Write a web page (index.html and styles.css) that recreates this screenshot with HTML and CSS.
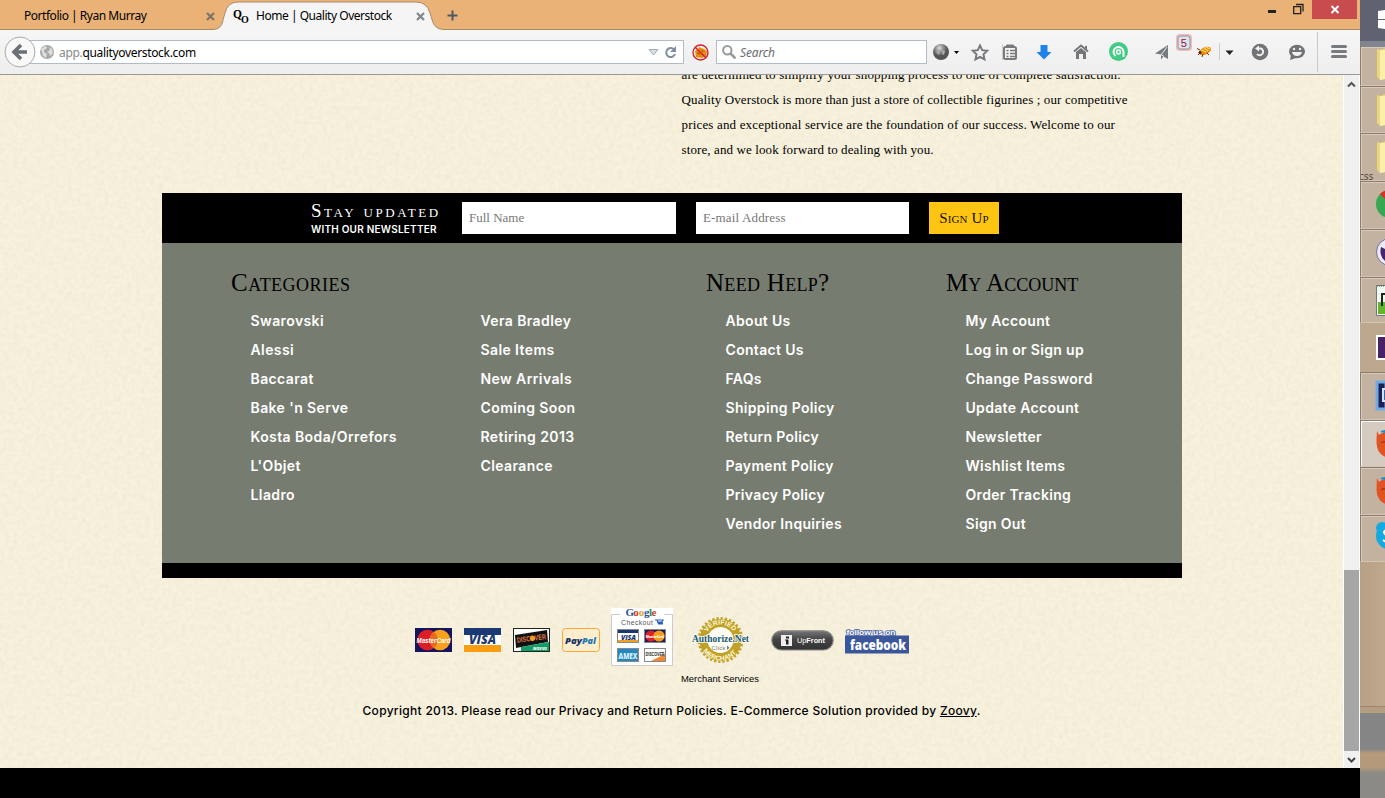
FILE: index.html
```html
<!DOCTYPE html>
<html lang="en">
<head>
<meta charset="utf-8">
<title>Home | Quality Overstock</title>
<link rel="stylesheet" href="styles.css">
</head>
<body>
<div class="desktop">
<div class="window">
  <header class="tabs">
    <div class="tab"><span class="tab-text">Portfolio | Ryan Murray</span>
      <svg class="close" width="9" height="9" viewBox="0 0 9 9"><path d="M1 1l7 7M8 1l-7 7" stroke="#7d7468" stroke-width="2.2"/></svg></div>
    <div class="tab active">
      <svg class="tab-shape" width="231" height="31" viewBox="0 0 231 31"><path d="M0 29.5C10 29 9 22 12 13Q14.500 2 25 2H203Q214 2 217 13C220 22 220 29 231 29.500V31H0Z" fill="#f5f5f5"/><path d="M0 29.500C10 29 9 22 12 13Q14.500 2 25 2H203Q214 2 217 13C220 22 220 29 231 29.500" fill="none" stroke="#a98a68"/></svg>
      <svg class="favicon" width="17" height="17" viewBox="0 0 17 17"><text x="0" y="9.500" font-size="11.500" font-weight="bold">Q</text><text x="8" y="15" font-size="10" font-weight="bold">O</text></svg>
      <span class="tab-text">Home | Quality Overstock</span>
      <svg class="close" width="9" height="9" viewBox="0 0 9 9"><path d="M1 1l7 7M8 1l-7 7" stroke="#7f858a" stroke-width="2.200"/></svg></div>
    <svg class="plus" width="11" height="11" viewBox="0 0 11 11"><path d="M5.500 .5v10M.5 5.500h10" stroke="#4c5964" stroke-width="2"/></svg>
    <div class="controls">
      <svg width="44" height="19" viewBox="0 0 44 19"><path d="M0 11.500h8" stroke="#222" stroke-width="3"/><path d="M25.700 6.700h7v7h-7zM28 4.500h7v7" fill="none" stroke="#222" stroke-width="1.300"/></svg>
      <svg class="win-close" width="45" height="19" viewBox="0 0 45 19"><path d="M19.500 6l7 7M26.500 6l-7 7" stroke="#fff" stroke-width="1.900"/></svg>
    </div>
  </header>
  <nav class="toolbar">
    <svg class="back" width="33" height="33" viewBox="0 0 33 33"><circle cx="16" cy="16" r="15" fill="#f8f8f8" stroke="#aaa"/><path d="M17 9l-7 7 7 7M10.500 16H23" fill="none" stroke="#6c7076" stroke-width="3.600"/></svg>
    <div class="url">
      <svg width="14" height="14" viewBox="0 0 14 14"><circle cx="7" cy="7" r="7" fill="#a7a7a7"/><path d="M1 4l4-3 2 1-1 2-2 1v2l3 2-1 4-3-2-1-4zM9 2l3 2 1 4-3 3-1-3-2-1 3-2z" fill="#dedede"/></svg>
      <span class="address"><i>app.</i>qualityoverstock.com</span>
      <svg width="29" height="14" viewBox="0 0 29 14"><path d="M1 4.500h9L5.500 10z" fill="#d9dfe7" stroke="#a2abb7"/><path d="M26 4.500A4.500 4.500 0 1 0 27 9" fill="none" stroke="#7f8fa0" stroke-width="2"/><path d="M28 1v6h-6z" fill="#7f8fa0"/></svg>
    </div>
    <svg class="no-bug" width="17" height="17" viewBox="0 0 17 17"><path d="M3 7l3-2 1-2 5 2 3 2-1 5-4 2-6-1z" fill="#e98a10"/><path d="M5 9l3 1M10 6l1 2" stroke="#955317"/><circle cx="8.500" cy="8.500" r="7.500" fill="none" stroke="#d3222d" stroke-width="1.400"/><path d="M3.200 3.200l10.600 10.600" stroke="#d3222d" stroke-width="1.500"/></svg>
    <div class="search"><svg width="14" height="14" viewBox="0 0 14 14"><circle cx="5.300" cy="5.300" r="4.200" fill="none" stroke="#999" stroke-width="2"/><path d="M8.500 8.500l5 5" stroke="#999" stroke-width="2.600"/></svg><span>Search</span></div>
    <svg class="tools" width="420" height="44" viewBox="0 0 420 44">
      <defs><radialGradient id="ball" cx=".4" cy=".25"><stop offset="0" stop-color="#ddd"/><stop offset=".55" stop-color="#888"/><stop offset="1" stop-color="#555"/></radialGradient></defs>
      <circle cx="9" cy="22" r="8" fill="url(#ball)"/><path d="M4 22l2-2 2 2-1 3zM10 20l3 1-1 4-2-1z" fill="#aaa"/><path d="M22 21h5l-2.500 3z"/>
      <path d="M48 15.500l2.200 4.700 5 .6-3.700 3.500 1 5-4.500-2.500-4.500 2.500 1-5-3.700-3.500 5-.6z" fill="none" stroke="#74777c" stroke-width="1.900"/>
      <path d="M70.500 14v16" stroke="#ccc"/>
      <rect x="72" y="17" width="12" height="12" rx="1.500" fill="#f4f4f4" stroke="#777a7e" stroke-width="2"/><path d="M74.500 17v-2h7v2" fill="#777a7e" stroke="#777a7e"/><path d="M74.500 20.500h2M78 20.500h5M74.500 23.500h2M78 23.500h5M74.500 26.500h2M78 26.500h5" stroke="#777a7e" stroke-width="1.400"/>
      <path d="M108.500 15h7V22h4l-7.500 7.500-7.500-7.500h4z" fill="#1f83ea"/>
      <path d="M142 21.500l7-6 7 6" fill="none" stroke="#73777b" stroke-width="2"/><path d="M144 22l5-4 5 4v7h-3v-5h-4v5h-3zM153 16h2v4l-2-2z" fill="#73777b"/>
      <circle cx="186.500" cy="21.500" r="9.500" fill="#42cb83"/><path d="M183.500 26a5 5 0 1 1 8-4.500V27" fill="none" stroke="#fff" stroke-width="1.900"/><circle cx="186.500" cy="22" r="1.900" fill="none" stroke="#fff" stroke-width="1.500"/>
      <path d="M236 15v14l-4.500-2.500-2.500 3v-5l-6-1z" fill="#777a7e"/><path d="M229 25l6-8M229 24.500l3 2" stroke="#eee"/>
      <rect x="244" y="4" width="16" height="17" rx="3.500" fill="#f0a5a0" opacity=".7"/><rect x="246" y="6" width="12" height="13" rx="2.500" fill="#dce3ef" stroke="#8a90a3"/><text class="badge-num" x="248.800" y="16.500">5</text>
      <ellipse cx="273" cy="21" rx="6.500" ry="3.500" transform="rotate(-25 273 21)" fill="#ec8c16"/><path d="M269 20l5 2M272 18l4 3M274 17l4 2" stroke="#ffdc53" stroke-width="1.200"/><path d="M268 20l-3-1.500M268 23l-2 2M271 24l-1 3M275 23l2 2" stroke="#70300d"/><circle cx="268" cy="22.500" r="1.500" fill="#50200d"/>
      <path d="M287.500 13v17" stroke="#ccc"/><path d="M293.500 20.500h8l-4 4.500z" fill="#222"/>
      <circle cx="328" cy="22" r="8.300" fill="#717477"/><path d="M325 18.500h4a3.500 3.500 0 1 1-4 5.500" fill="none" stroke="#f2f2f2" stroke-width="1.900"/><path d="M323 18.500l4-3v6z" fill="#f2f2f2"/>
      <ellipse cx="365" cy="21.500" rx="8" ry="6.800" fill="#717477"/><path d="M359 25l-1 5 6-2z" fill="#717477"/><circle cx="362" cy="19" r="1.200" fill="#f2f2f2"/><circle cx="368" cy="19" r="1.200" fill="#f2f2f2"/><path d="M360 22h10q-1 4-5 4T360 22z" fill="#f2f2f2"/>
      <path d="M385.500 2v40" stroke="#c9c9c9"/><path d="M400.500 16.500h13M400.500 21.500h13M400.500 26.500h13" stroke="#777a7e" stroke-width="3" stroke-linecap="round"/>
    </svg>
  </nav>
  <div class="view">
    <main class="page">
      <svg class="paper" width="1343" height="693"><filter id="grain" x="0" y="0" width="100%" height="100%"><feTurbulence type="fractalNoise" baseFrequency=".22" numOctaves="3" seed="4"/><feColorMatrix values="0 0 0 0 .70  0 0 0 0 .63  0 0 0 0 .36  .7 .5 0 0 -.47"/></filter><rect width="100%" height="100%" filter="url(#grain)"/></svg>
      <div class="intro"><p class="l1">are determined to simplify your shopping process to one of complete satisfaction.</p><p class="l2">Quality Overstock is more than just a store of collectible figurines ; our competitive</p><p class="l3">prices and exceptional service are the foundation of our success. Welcome to our</p><p class="l4">store, and we look forward to dealing with you.</p></div>
      <footer class="footer">
        <form class="newsletter">
          <div class="pitch"><strong>Stay updated</strong><span>WITH OUR NEWSLETTER</span></div>
          <div class="field">Full Name</div>
          <div class="field mail">E-mail Address</div>
          <div class="signup">Sign Up</div>
        </form>
        <div class="links">
          <section class="cats"><h2>Categories</h2>
            <div class="cols"><ul><li>Swarovski</li><li>Alessi</li><li>Baccarat</li><li>Bake 'n Serve</li><li>Kosta Boda/Orrefors</li><li>L'Objet</li><li>Lladro</li></ul>
            <ul><li>Vera Bradley</li><li>Sale Items</li><li>New Arrivals</li><li>Coming Soon</li><li>Retiring 2013</li><li>Clearance</li></ul></div></section>
          <section class="help"><h2>Need Help?</h2><ul><li>About Us</li><li>Contact Us</li><li>FAQs</li><li>Shipping Policy</li><li>Return Policy</li><li>Payment Policy</li><li>Privacy Policy</li><li>Vendor Inquiries</li></ul></section>
          <section class="account"><h2>My Account</h2><ul><li>My Account</li><li>Log in or Sign up</li><li>Change Password</li><li>Update Account</li><li>Newsletter</li><li>Wishlist Items</li><li>Order Tracking</li><li>Sign Out</li></ul></section>
        </div>
      </footer>
      <div class="partners">
        <svg class="card" width="37" height="24" viewBox="0 0 37 24"><rect width="37" height="24" fill="#14145f"/><circle cx="12.500" cy="12" r="10.300" fill="#dc1f26"/><circle cx="25" cy="12" r="10.300" fill="#f9a11b"/><path d="M18.700 3.800a10.300 10.300 0 0 1 0 16.400a10.300 10.300 0 0 1 0-16.400" fill="#e66a20"/><text x="1.500" y="15" textLength="34" lengthAdjust="spacingAndGlyphs" class="logo it sans" font-size="8" fill="#fff">MasterCard</text></svg>
        <svg class="card" width="37" height="24" viewBox="0 0 37 24"><rect width="37" height="24" fill="#fff"/><rect width="37" height="7" fill="#1b3a73"/><rect y="17" width="37" height="7" fill="#f99d13"/><text x="5" y="16" textLength="27" lengthAdjust="spacingAndGlyphs" class="logo it" font-size="11.500" fill="#1b3a73">VISA</text></svg>
        <svg class="card" width="37" height="24" viewBox="0 0 37 24"><rect x=".5" y=".5" width="36" height="23" fill="#fff" stroke="#222"/><path d="M2 7l32-5 1 12-32 6z" fill="#111"/><path d="M36 15v8H12z" fill="#149b68"/><path d="M8 19l28-5v9H8z" fill="#149b68"/><g transform="rotate(-7 18 11)"><text x="4" y="13" textLength="29" lengthAdjust="spacingAndGlyphs" class="logo sans" font-size="7.500" fill="#e27a4b">DISCOVER</text><circle cx="19.500" cy="10.500" r="2.600" fill="#f79a21"/></g><text x="20" y="21.500" textLength="14" class="logo it" font-size="4" fill="#fff">NOVUS</text></svg>
        <svg class="card" width="38" height="24" viewBox="0 0 38 24"><rect x=".5" y=".5" width="37" height="23" rx="3" fill="#ffedcd" stroke="#f5a93b"/><text x="3" y="15.500" textLength="17" lengthAdjust="spacingAndGlyphs" class="logo it" font-size="9.500" fill="#183667">Pay</text><text x="20" y="15.500" textLength="14" lengthAdjust="spacingAndGlyphs" class="logo it" font-size="9.500" fill="#2379b5">Pal</text></svg>
        <svg class="google" width="62" height="58" viewBox="0 0 62 58"><rect width="62" height="58" fill="#fff"/><path d="M9 6.500H.5v51h61v-51H53" fill="none" stroke="#ccc"/><text y="8" class="gword" font-size="11" x="14.500" fill="#2653a5">G<tspan x="22.300" fill="#c83a35">o</tspan><tspan x="27.700" fill="#d9aa28">o</tspan><tspan x="33" fill="#2653a5">g</tspan><tspan x="38" fill="#31924b">l</tspan><tspan x="40.600" fill="#c83a35">e</tspan></text><text x="10" y="16.500" font-size="6.800" class="logo light" textLength="32" fill="#555">Checkout</text><path d="M44 12h2l1 3h5M46 12h6l-1 2h-4M47 16h5" fill="none" stroke="#2b5ac0" stroke-width="1.200"/>
          <g><rect x="6.500" y="21.500" width="21" height="13" fill="#fff" stroke="#888"/><path d="M7 22h20v3H7z" fill="#18386f"/><path d="M7 32h20v2H7z" fill="#f5a11c"/><text x="10" y="31.500" class="logo it" font-size="7" textLength="15" fill="#18386f">VISA</text></g>
          <g><rect x="33.500" y="21.500" width="21" height="13" fill="#1b1b5f" stroke="#888"/><circle cx="40" cy="28" r="5.600" fill="#dd2226"/><circle cx="48" cy="28" r="5.600" fill="#f49d1c"/><text x="35" y="30" class="logo" font-size="4" textLength="18" lengthAdjust="spacingAndGlyphs" fill="#fff">MasterCard</text></g>
          <g><rect x="6.500" y="40.500" width="21" height="13" fill="#2687bf" stroke="#888"/><text x="7.500" y="50.500" class="logo" font-size="8" textLength="19" lengthAdjust="spacingAndGlyphs" fill="#d7edf8">AMEX</text></g>
          <g><rect x="33.500" y="40.500" width="21" height="13" fill="#fff" stroke="#888"/><path d="M54 46v7H40z" fill="#ef8737"/><text x="34.500" y="47.500" class="logo sans" font-size="4.800" textLength="19" lengthAdjust="spacingAndGlyphs" fill="#222">DISCOVER</text></g></svg>
        <svg class="auth" width="78" height="72" viewBox="0 0 78 72"><defs><path id="arcTop" d="M24 23a15.500 15.500 0 0 1 31 0"/><path id="arcBottom" d="M19 23a20.500 20.500 0 0 0 41 0"/></defs><circle cx="39.500" cy="23" r="21.500" fill="none" stroke="#c2a42d" stroke-width="3" stroke-dasharray="2.300 1.900"/><circle cx="39.500" cy="23" r="17" fill="#fffdf3" stroke="#bfa128" stroke-width="8"/><text class="seal"><textPath href="#arcTop" startOffset="8">VERIFIED</textPath></text><text class="seal"><textPath href="#arcBottom" startOffset="11.500">MERCHANT</textPath></text><text x="11" y="25" textLength="57" lengthAdjust="spacingAndGlyphs" class="authword">Authorize.Net</text><text x="30.500" y="33" class="logo light" font-size="6" fill="#777" textLength="14">Click</text><path d="M46 28.500l2.500 2.200-2.500 2.200z" fill="#777"/><text x="0" y="65" textLength="78" lengthAdjust="spacingAndGlyphs" class="merchant">Merchant Services</text></svg>
        <svg class="upfront" width="63" height="21" viewBox="0 0 63 21"><defs><linearGradient id="pill" x2="0" y2="1"><stop offset="0" stop-color="#777"/><stop offset=".45" stop-color="#444"/><stop offset="1" stop-color="#333"/></linearGradient></defs><rect x=".8" y=".8" width="61.400" height="19.200" rx="9.600" fill="url(#pill)" stroke="#888" stroke-width="1.200"/><rect x="10" y="5" width="11" height="11" fill="#eee"/><path d="M15 6.500h3v2h-3zM14 9.500h3.500v5H15v-4h-1z" fill="#222"/><text x="26" y="13" textLength="28" lengthAdjust="spacingAndGlyphs" class="logo light" font-size="7.500" fill="#fff">Up<tspan font-weight="bold">Front</tspan></text></svg>
        <svg class="fb" width="65" height="26" viewBox="0 0 65 26"><path d="M0 7.500h64v18H0z" fill="#3a569c"/><text x="1.500" y="6.500" textLength="49" lengthAdjust="spacingAndGlyphs" class="logo follow" font-size="7.500">follow us on</text><text x="5" y="22" textLength="56" lengthAdjust="spacingAndGlyphs" class="logo" font-size="14" fill="#fff">facebook</text></svg>
      </div>
      <p class="copy">Copyright 2013. Please read our Privacy and Return Policies. E-Commerce Solution provided by <u>Zoovy</u>.</p>
    </main>
    <div class="scroll"><svg width="15" height="19" viewBox="0 0 15 19"><path d="M4 11.500l3.500-3.500L11 11.500" fill="none" stroke="#555" stroke-width="2"/></svg><div class="thumb"></div><svg width="15" height="17" viewBox="0 0 15 17"><path d="M4 7l3.500 3.500L11 7" fill="none" stroke="#444" stroke-width="2"/></svg></div>
  </div>
</div>
<aside class="taskbar">
  <div class="start"><svg width="25" height="41" viewBox="0 0 25 41"><path d="M18 11l7-1v9h-7zM18 20h7v9l-7-1z" fill="#fff"/></svg></div>
  <div class="task h45 folder"><svg width="25" height="45"><path d="M17 6l3 1 6-2v31l-6 1-3-3z" fill="#ecd676"/><path d="M20 7h5v29l-5 1z" fill="#fbefad"/></svg></div>
  <div class="task h46"><svg width="25" height="45"><path d="M17 8l3 1 6-2v31l-6 1-3-3z" fill="#ecd676"/><path d="M20 9h5v29l-5 1z" fill="#fbefad"/></svg></div>
  <div class="task h48"><svg width="25" height="48"><path d="M17 8l3 1 6-2v31l-6 1-3-3z" fill="#ecd676"/><path d="M20 9h5v29l-5 1z" fill="#fbefad"/><text class="css-label" x="-1" y="46">css</text></svg></div>
  <div class="task h48"><svg width="25" height="45"><circle cx="30" cy="22" r="14" fill="#36a852"/><path d="M20 12L30 22V8a14 14 0 0 0-10 4z" fill="#dc2e24"/></svg></div>
  <div class="task h48"><svg width="25" height="45"><circle cx="30" cy="22" r="13.500" fill="#eceaf5" stroke="#7170a0"/><path d="M21 17l4 2v12q-6-5-4-14z" fill="#47246f"/></svg></div>
  <div class="task h47"><svg width="25" height="45"><path d="M16.500 7.500h10v30h-10z" fill="#effaf0" stroke="#777"/><path d="M18 24h8v12h-8z" fill="#63b52e"/><path d="M22 28V16h4" fill="none" stroke="#222" stroke-width="2"/><path d="M17 8h8" stroke="#555" stroke-dasharray="1 1"/></svg></div>
  <div class="task h49 plain"><svg width="25" height="48"><path d="M17 12h9v23h-9z" fill="#472266" stroke="#fff" stroke-width="2"/></svg></div>
  <div class="task h48"><svg width="25" height="45"><path d="M17 9h9v27h-9z" fill="#1d2157" stroke="#71a9e1" stroke-width="3"/><path d="M25 16h-2v12h2" fill="none" stroke="#cbe6ff" stroke-width="2"/></svg></div>
  <div class="task h46 lit"><svg width="25" height="45"><circle cx="29" cy="22" r="12" fill="#268bc4"/><path d="M17 10l2 4q3-3 7-2v24Q17 33 16.500 22q0-5 .5-12z" fill="#df5422"/><path d="M21 22q2-2 4-1" fill="none" stroke="#8e2613"/><path d="M20 11q2-2 5-2v3z" fill="#268bc4"/></svg></div>
  <div class="task h48"><svg width="25" height="45"><circle cx="29" cy="22" r="12" fill="#268bc4"/><path d="M17 10l2 4q3-3 7-2v24Q17 33 16.500 22q0-5 .5-12z" fill="#df5422"/><path d="M21 22q2-2 4-1" fill="none" stroke="#8e2613"/><path d="M20 11q2-2 5-2v3z" fill="#268bc4"/></svg></div>
  <div class="task h46"><svg width="25" height="45"><circle cx="29" cy="20" r="13" fill="#14a9df"/><circle cx="22" cy="12" r="6" fill="#14a9df"/><path d="M26 14q-4 2 0 5M23 24l3 2" fill="none" stroke="#fff" stroke-width="2"/></svg></div>
  <div class="desk"></div><div class="ledge"></div><div class="photo"></div>
</aside>
</div>
</body>
</html>
```
FILE: styles.css
```css
* { box-sizing: border-box; }
body { margin: 0; background: #000; overflow: hidden; font-family: "Liberation Sans", sans-serif; }
svg { display: block; flex: none; }
p, h2, ul { margin: 0; padding: 0; }
.desktop { display: flex; width: 1385px; height: 798px; }
.window { width: 1360px; height: 768px; display: flex; flex-direction: column; }

/* Tab strip */
.tabs { height: 30px; background: #ebb278; border-bottom: 1px solid #a98a68; display: flex; align-items: flex-start; font: 12px/17px "Noto Sans", sans-serif; }
.tab { display: flex; align-items: center; height: 30px; width: 215px; padding: 2px 0 0 24px; position: relative; z-index: 1; white-space: nowrap; }
.tab-text { letter-spacing: -.47px; width: 182px; margin-top: -1px; }
.tab.active { width: 224px; padding-left: 18px; }
.active .tab-text { width: 160px; margin-left: 6px; position: relative; }
.tab-shape { position: absolute; left: -2px; top: 0; }
.favicon { position: relative; font-family: "Liberation Serif", serif; }
.close { position: relative; }
.plus { margin: 10px 0 0 8px; }
.controls { margin-left: auto; display: flex; }
.win-close { background: #c84c4e; margin-right: 3px; }

/* Toolbar */
.toolbar { height: 45px; background: linear-gradient(#f6f6f6, #eee); border-bottom: 1px solid #999; display: flex; align-items: center; }
.back { margin-left: 4px; z-index: 1; }
.url { width: 654px; height: 24px; margin-left: -7px; padding: 0 6px 0 9px; background: #fff; border: 1px solid #b1bcc9; display: flex; align-items: center; }
.address { flex: 1; margin: 1px 0 0 5px; font: 12px/20px "Noto Sans", sans-serif; letter-spacing: -.33px; }
.address i { font-style: normal; color: #888; }
.no-bug { margin-left: 8px; }
.search { width: 211px; height: 24px; margin: 0 5px 0 7px; padding-left: 5px; border: 1px solid #b1bcc9; background: #fff; display: flex; align-items: center; gap: 4px; font: italic 12px "Noto Sans", sans-serif; letter-spacing: -.15px; color: #6d6d6d; }
.badge-num { font: 11px "Liberation Sans", sans-serif; fill: #9b1125; }

/* Page */
.view { height: 693px; display: flex; }
.page { width: 1343px; height: 693px; overflow: hidden; background: #f7f1de; position: relative; }
.paper { position: absolute; left: 0; top: 0; opacity: .4; }
.intro, .footer, .partners, .copy { position: relative; }
.intro { margin: -13px 0 31px 681.500px; height: 100px; font: 13px/25px "Liberation Serif", serif; color: #000; white-space: nowrap; }
.l1 { letter-spacing: .19px; }
.l2 { letter-spacing: .12px; }
.l3 { letter-spacing: .17px; }
.l4 { letter-spacing: .11px; }
.footer { width: 1020px; margin-left: 162px; }
.newsletter { height: 50px; background: #000; display: flex; align-items: center; padding-left: 149px; }
.pitch { width: 151px; color: #fff; white-space: nowrap; }
.pitch strong { display: block; font: small-caps 19px/22px "Liberation Serif", serif; letter-spacing: 2.550px; }
.pitch span { display: block; font: 600 10px/14px Inter, sans-serif; letter-spacing: .23px; }
.field { width: 214px; height: 32px; margin-right: 20px; padding-left: 7px; background: #fff; color: #777; font: 13px/32px "Liberation Serif", serif; }
.field.mail { width: 213px; letter-spacing: .15px; }
.signup { width: 70px; height: 32px; text-align: center; background: #ffc512; color: #151000; font: small-caps 15px/33px "Liberation Serif", serif; letter-spacing: .1px; }
.links { height: 335px; background: #777c70; border-bottom: 15px solid #000; padding: 22px 0 0 69px; display: flex; color: #fff; }
.cats { width: 475px; }
.help { width: 240px; }
.cols { display: flex; }
.cols ul { width: 230px; flex: none; }
h2 { font: small-caps 25px/36px "Liberation Serif", serif; color: #000; white-space: nowrap; }
.cats h2 { letter-spacing: .48px; }
.help h2 { letter-spacing: .3px; }
ul { list-style: none; margin: 5px 0 0 19.500px; }
.cols ul + ul { margin-left: 0; }
li { font: 600 14px/29px Inter, sans-serif; letter-spacing: .32px; white-space: nowrap; }
.cats li { letter-spacing: .4px; }
.partners { display: flex; align-items: flex-start; margin: 30px 0 0 415px; height: 82px; gap: 12px; }
.partners svg { overflow: visible; }
.card { margin-top: 20px; }
.google { margin-left: -1px; }
.auth { margin: 9px 0 0 -4px; }
.upfront { margin-top: 22px; }
.fb { margin: 20px 0 0 -1px; }
.logo { font-family: "Open Sans", sans-serif; font-weight: 800; }
.logo.sans { font-family: "Liberation Sans", sans-serif; font-weight: bold; }
.logo.it { font-style: italic; }
.logo.light { font-family: "Liberation Sans", sans-serif; font-weight: normal; }
.follow { font-family: "Liberation Sans", sans-serif; font-weight: bold; fill: #fff; stroke: #4a64a5; stroke-width: 1.600px; paint-order: stroke; }
.gword { font-family: "Liberation Serif", serif; font-weight: bold; }
.seal { font: bold 6.800px "Liberation Sans", sans-serif; fill: #fff8d5; }
.authword { font: bold 11px "Liberation Serif", serif; fill: #17597b; stroke: #fffdf0; stroke-width: 1.500px; paint-order: stroke; }
.merchant { font: 9.500px "Liberation Sans", sans-serif; }
.copy { margin: 11px 0 0 362.500px; font: 500 12px/20px Inter, sans-serif; letter-spacing: .3px; color: #000; white-space: nowrap; }

/* Scrollbar */
.scroll { width: 17px; background: #f0f0f0; border: solid #fff; border-width: 0 1px; display: flex; flex-direction: column; }
.thumb { height: 181px; background: #a6a6a6; margin-top: auto; }

/* Taskbar */
.taskbar { width: 25px; height: 798px; overflow: hidden; background: #bda58b; display: flex; flex-direction: column; }
.start { height: 41px; flex: none; background: #5f6370; }
.task { flex: none; border-left: 1px solid #8d7c6b; border-top: 1px solid #8d7c6b; border-bottom: 1px solid #d4c4b2; background: #c4b2a0; box-shadow: inset 1px 1px #d8cabb; overflow: hidden; }
.task svg { margin-left: -1px; }
.folder { border-top: 6px solid #828590; }
.folder svg { margin-top: -4px; }
.h45 { height: 45px; }
.h46 { height: 47px; }
.h48 { height: 48px; }
.h47 { height: 46px; }
.h49 { height: 49px; }
.plain { background: #bca78f; border-color: transparent; box-shadow: none; }
.lit { background: #d6cbc0; box-shadow: inset 1px 1px #fff; }
.css-label { font: 10px "Noto Sans", sans-serif; fill: #554b42; }
.desk { flex: 1; background: linear-gradient(90deg, #b8a084, #c0a88f); }
.ledge { height: 7px; background: #b59d80; border-top: 1px solid #988570; flex: none; }
.photo { height: 85px; flex: none; background: linear-gradient(#858585 0 36px, #b59a7c 40px 54px, #8c8a84 60px); }
```
